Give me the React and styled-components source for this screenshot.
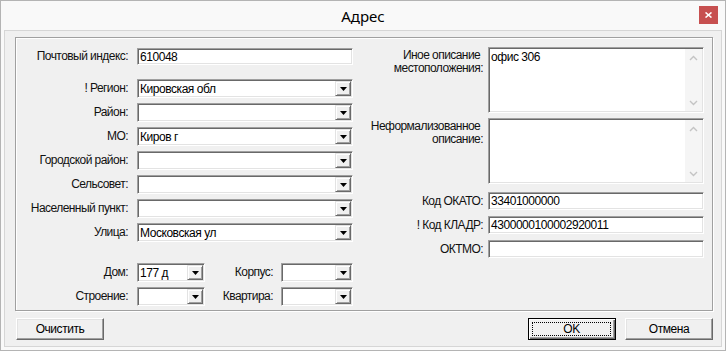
import React from "react";
import styled, { createGlobalStyle } from "styled-components";

const GlobalStyle = createGlobalStyle`
  html, body {
    margin: 0;
    padding: 0;
    background: #ffffff;
  }
  body {
    font-family: "Liberation Sans", Arial, sans-serif;
  }
  * {
    box-sizing: border-box;
  }
`;

const ArrowDown = () => (
  <svg width="7" height="4" viewBox="0 0 7 4">
    <polygon points="0,0 7,0 3.5,4" fill="#000" />
  </svg>
);

const Chevron = ({ up }) => (
  <svg width="9" height="6" viewBox="0 0 9 6">
    <polyline
      points={up ? "1,5 4.5,1.5 8,5" : "1,1 4.5,4.5 8,1"}
      fill="none"
      stroke="#c4c4c4"
      strokeWidth="1.4"
    />
  </svg>
);

function Combo({ value }) {
  return (
    <ComboBox>
      <ComboText>{value}</ComboText>
      <ComboArrow>
        <ArrowDown />
      </ComboArrow>
    </ComboBox>
  );
}

function Memo({ value }) {
  return (
    <MemoBox>
      <MemoText>{value}</MemoText>
      <Scrollbar>
        <ScrollBtn>
          <Chevron up />
        </ScrollBtn>
        <ScrollBtn>
          <Chevron />
        </ScrollBtn>
      </Scrollbar>
    </MemoBox>
  );
}

const leftCombos = [
  { label: "! Регион:", value: "Кировская обл", gap: 14 },
  { label: "Район:", value: "" },
  { label: "МО:", value: "Киров г" },
  { label: "Городской район:", value: "" },
  { label: "Сельсовет:", value: "" },
  { label: "Населенный пункт:", value: "" },
  { label: "Улица:", value: "Московская ул" },
];

const codes = [
  { label: "Код ОКАТО:", value: "33401000000", gap: 8 },
  { label: "! Код КЛАДР:", value: "4300000100002920011" },
  { label: "ОКТМО:", value: "" },
];

export default function App() {
  return (
    <>
      <GlobalStyle />
      <Window>
        <TitleBar>
          <Title>Адрес</Title>
          <CloseButton>
            <svg width="7" height="6" viewBox="0 0 7 6">
              <path d="M0.5 0.5 L6.5 5.5 M6.5 0.5 L0.5 5.5" stroke="#fff" strokeWidth="1.6" />
            </svg>
          </CloseButton>
        </TitleBar>
        <Client>
          <GroupBox>
            <LeftColumn>
              <LeftRow $gap={0}>
                <Label>Почтовый индекс:</Label>
                <Field>610048</Field>
              </LeftRow>
              {leftCombos.map((c) => (
                <LeftRow key={c.label} $gap={c.gap}>
                  <Label>{c.label}</Label>
                  <Combo value={c.value} />
                </LeftRow>
              ))}
              <LeftRow $gap={21}>
                <Label>Дом:</Label>
                <HouseGrid>
                  <Combo value="177 д" />
                  <Label>Корпус:</Label>
                  <Combo value="" />
                </HouseGrid>
              </LeftRow>
              <LeftRow>
                <Label>Строение:</Label>
                <HouseGrid>
                  <Combo value="" />
                  <Label>Квартира:</Label>
                  <Combo value="" />
                </HouseGrid>
              </LeftRow>
            </LeftColumn>

            <RightColumn>
              <RightRow $gap={0}>
                <Label $top>
                  Иное описание&nbsp;
                  <br />
                  местоположения:
                </Label>
                <Memo value="офис 306" />
              </RightRow>
              <RightRow>
                <Label $top>
                  Неформализованное&nbsp;
                  <br />
                  описание:
                </Label>
                <Memo value="" />
              </RightRow>
              {codes.map((c) => (
                <RightRow key={c.label} $gap={c.gap ?? 6}>
                  <Label>{c.label}</Label>
                  <Field $h={18}>{c.value}</Field>
                </RightRow>
              ))}
            </RightColumn>
          </GroupBox>

          <ButtonBar>
            <Button>Очистить</Button>
            <Button $push $default>
              <FocusRect>OK</FocusRect>
            </Button>
            <Button $space>Отмена</Button>
          </ButtonBar>
        </Client>
      </Window>
    </>
  );
}

const Window = styled.div`
  width: 726px;
  height: 351px;
  border: 1px solid #b4b4b4;
  background: #f9f9f9;
  display: flex;
  flex-direction: column;
`;

const TitleBar = styled.div`
  height: 29px;
  display: grid;
  grid-template-columns: 1fr auto 1fr;
  align-items: start;
`;

const Title = styled.div`
  grid-column: 2;
  font-family: "Noto Sans", "Open Sans", sans-serif;
  font-size: 15px;
  line-height: 30px;
  color: #000;
`;

const CloseButton = styled.div`
  grid-column: 3;
  justify-self: end;
  margin: 5px 7px 0 0;
  width: 19px;
  height: 18px;
  background: #c75050;
  display: flex;
  align-items: center;
  justify-content: center;
`;

const Client = styled.div`
  flex: 1;
  margin: 0 3px 3px;
  border: 1px solid #d6d6d6;
  background: #f0f0f0;
  padding: 6px 8px 0 10px;
  display: flex;
  flex-direction: column;
`;

const GroupBox = styled.div`
  height: 274px;
  border: 1px solid #a0a0a0;
  box-shadow: inset 1px 1px 0 #fff, 1px 1px 0 #fff;
  display: flex;
  padding-right: 8px;
`;

const LeftColumn = styled.div`
  width: 337px;
  padding-top: 10px;
  display: flex;
  flex-direction: column;
`;

const RightColumn = styled.div`
  margin-left: 7px;
  padding-top: 9px;
  display: flex;
  flex-direction: column;
`;

const LeftRow = styled.div`
  display: grid;
  grid-template-columns: 112px 216px;
  column-gap: 9px;
  align-items: center;
  margin-top: ${(p) => p.$gap ?? 5}px;
`;

const RightRow = styled.div`
  display: grid;
  grid-template-columns: 123px 216px;
  column-gap: 5px;
  align-items: center;
  margin-top: ${(p) => p.$gap ?? 5}px;
`;

const Label = styled.div`
  text-align: right;
  font-size: 12px;
  letter-spacing: -0.55px;
  line-height: 13px;
  color: #111;
  white-space: nowrap;
  align-self: ${(p) => (p.$top ? "start" : "center")};
  padding-top: ${(p) => (p.$top ? "2px" : "0")};
`;

const Field = styled.div`
  height: ${(p) => p.$h || 17}px;
  background: #fff;
  border: 1px solid;
  border-color: #a0a0a0 #fff #fff #a0a0a0;
  box-shadow: inset 1px 1px 0 #696969, inset -1px -1px 0 #e3e3e3;
  padding: 0 2px;
  display: flex;
  align-items: center;
  font-size: 12px;
  letter-spacing: -0.45px;
  color: #000;
`;

const ComboBox = styled.div`
  height: 19px;
  background: #fff;
  border: 1px solid;
  border-color: #a0a0a0 #fff #fff #a0a0a0;
  box-shadow: inset 1px 1px 0 #696969, inset -1px -1px 0 #e3e3e3;
  padding: 1px;
  display: flex;
`;

const ComboText = styled.div`
  flex: 1;
  padding-left: 1px;
  display: flex;
  align-items: center;
  font-size: 12px;
  letter-spacing: -0.45px;
  color: #000;
  white-space: nowrap;
  overflow: hidden;
`;

const ComboArrow = styled.div`
  width: 16px;
  background: #f0f0f0;
  border: 1px solid;
  border-color: #e3e3e3 #696969 #696969 #e3e3e3;
  box-shadow: inset 1px 1px 0 #fff, inset -1px -1px 0 #a0a0a0;
  display: flex;
  align-items: center;
  justify-content: center;
`;

const HouseGrid = styled.div`
  display: grid;
  grid-template-columns: 68px 1fr 72px;
  column-gap: 8px;
  align-items: center;
`;

const MemoBox = styled.div`
  height: 66px;
  background: #fff;
  border: 1px solid;
  border-color: #a0a0a0 #fff #fff #a0a0a0;
  box-shadow: inset 1px 1px 0 #696969, inset -1px -1px 0 #e3e3e3;
  padding: 1px;
  display: flex;
`;

const MemoText = styled.div`
  flex: 1;
  padding: 2px 1px;
  font-size: 12px;
  letter-spacing: -0.45px;
  line-height: 13px;
  color: #000;
`;

const Scrollbar = styled.div`
  width: 17px;
  background: #f5f5f5;
  display: flex;
  flex-direction: column;
  justify-content: space-between;
`;

const ScrollBtn = styled.div`
  height: 17px;
  display: flex;
  align-items: center;
  justify-content: center;
`;

const ButtonBar = styled.div`
  margin-top: 7px;
  padding-left: 1px;
  display: flex;
`;

const Button = styled.div`
  width: 88px;
  height: 22px;
  background: #f0f0f0;
  border: 1px solid;
  border-color: ${(p) => (p.$default ? "#000" : "#fff #696969 #696969 #fff")};
  box-shadow: ${(p) =>
    p.$default
      ? "inset 1px 1px 0 #fff, inset -1px -1px 0 #696969, inset -2px -2px 0 #a0a0a0"
      : "inset -1px -1px 0 #a0a0a0, inset 1px 1px 0 #e3e3e3"};
  margin-left: ${(p) => (p.$push ? "auto" : p.$space ? "9px" : "0")};
  padding: ${(p) => (p.$default ? "3px 4px 3px 3px" : "0")};
  display: flex;
  align-items: center;
  justify-content: center;
  font-size: 12px;
  letter-spacing: -0.45px;
  color: #000;
`;

const FocusRect = styled.div`
  flex: 1;
  align-self: stretch;
  border: 1px dotted #000;
  display: flex;
  align-items: center;
  justify-content: center;
`;
